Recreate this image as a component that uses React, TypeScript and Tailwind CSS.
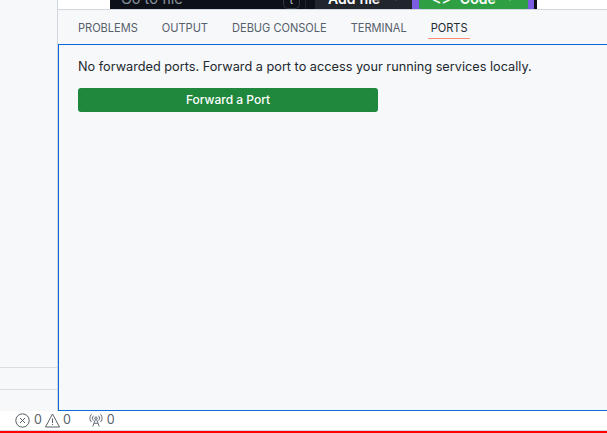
import { ChevronDown } from 'lucide-react';

const tabs = ['PROBLEMS', 'OUTPUT', 'DEBUG CONSOLE', 'TERMINAL', 'PORTS'];

function TopStrip() {
  return (
    <div className="flex h-[9px] shrink-0 overflow-hidden bg-white pl-[52px] pr-[70px]">
      <div className="flex h-[9px] flex-1 items-end overflow-hidden whitespace-nowrap bg-[#0d1117]">
        <div className="flex h-[9px] w-[196px] shrink-0 items-end justify-between border-r border-[#21262d] pl-[11px] pr-[5px]">
          <span className="mb-[3px] text-[14.5px] leading-none text-[#8b949e]">Go to file</span>
          <div className="flex h-[9px] w-[17px] items-end justify-center rounded-b-[5px] border border-t-0 border-[#30363d] pb-[3px] text-[10px] leading-none text-[#c9d1d9]">
            t
          </div>
        </div>
        <div className="ml-[9px] flex h-[9px] w-[97px] shrink-0 items-end rounded-br-[2px] bg-[#21262d] pb-[3px] pl-[13px] text-[14px] font-semibold leading-none text-white">
          Add file
          <ChevronDown size={10} className="mb-[2px] ml-[11px] text-[#8b949e]" />
        </div>
        <div className="flex h-[9px] w-[122px] shrink-0 bg-[#7c5ce0] pl-[7px] pr-[6px]">
          <div className="flex h-[9px] w-[109px] items-end rounded-b-[2px] bg-[#2ea043] pb-[3px] pl-[13px] text-[14px] font-semibold leading-none text-white">
            {'<>'}
            <span className="ml-[9px]">Code</span>
            <ChevronDown size={10} className="mb-[2px] ml-[9px]" />
          </div>
        </div>
      </div>
    </div>
  );
}

function Tabs() {
  return (
    <div className="flex h-[34px] shrink-0 gap-6 px-5 pt-[9px]">
      {tabs.map((tab) => (
        <div key={tab} className="relative h-[20px]">
          <span
            className={
              tab === 'PORTS'
                ? 'block text-[11.05px] leading-[18px] text-[#24292f]'
                : 'block text-[11.05px] leading-[18px] text-[#57606a]'
            }
          >
            {tab}
          </span>
          {tab === 'PORTS' && <div className="absolute -left-[3px] -right-[2px] bottom-0 h-px bg-[#fd8c73]" />}
        </div>
      ))}
    </div>
  );
}

export default function App() {
  return (
    <div className="flex h-[433px] w-[607px] flex-col overflow-hidden bg-white font-['Inter',sans-serif]">
      <div className="flex min-h-0 flex-1 bg-[#f6f8fa]">
        <div className="flex w-[58px] shrink-0 flex-col justify-end border-r border-[#d0d7de]">
          <div className="h-[22px] border-t border-[#d8dee4]" />
          <div className="h-[22px] border-t border-[#d8dee4]" />
        </div>
        <div className="flex min-w-0 flex-1 flex-col">
          <TopStrip />
          <div className="h-px shrink-0 bg-[#d0d7de]" />
          <Tabs />
          <div className="flex-1 border border-r-0 border-[#0969da] px-[19px] pt-[14px]">
            <p className="text-[12.72px] leading-[16px] text-[#24292f]">
              No forwarded ports. Forward a port to access your running services locally.
            </p>
            <button className="mt-[13px] flex h-6 w-[300px] items-center justify-center rounded-[3px] bg-[#1f883d] text-[12px] font-medium text-white">
              Forward a Port
            </button>
          </div>
        </div>
      </div>
      <div className="flex h-[19px] shrink-0 items-center bg-white pl-[15px] text-[12.5px] text-[#57606a]">
        <svg width="15" height="15" viewBox="0 0 15 15" fill="none" stroke="currentColor" strokeWidth="1">
          <circle cx="7.5" cy="7.5" r="6.7" />
          <path d="M5 5l5 5M10 5l-5 5" />
        </svg>
        <span className="ml-[4px]">0</span>
        <svg className="ml-[3px]" width="15" height="15" viewBox="0 0 15 15" fill="none" stroke="currentColor" strokeWidth="1">
          <path d="M7.5 1L14.5 14H0.5Z" strokeLinejoin="round" />
          <path d="M7.5 5.5V10M7.5 11V12" />
        </svg>
        <span className="ml-[3px]">0</span>
        <svg className="ml-[18px]" width="14" height="15" viewBox="0 0 15 15" fill="none" stroke="currentColor" strokeWidth="1">
          <circle cx="7.5" cy="5" r="1.3" />
          <path d="M6.8 6.5L4 14M8.2 6.5L11 14M5.6 10.5H9.4" />
          <path d="M4.6 2.4a4 4 0 0 0 0 5.2M10.4 2.4a4 4 0 0 1 0 5.2M2.7 0.8a6.5 6.5 0 0 0 0 8.4M12.3 0.8a6.5 6.5 0 0 1 0 8.4" />
        </svg>
        <span className="ml-[4px]">0</span>
      </div>
      <div className="h-px shrink-0 bg-[#d0d7de]" />
      <div className="h-[2px] shrink-0 bg-[#ff0000]" />
    </div>
  );
}
